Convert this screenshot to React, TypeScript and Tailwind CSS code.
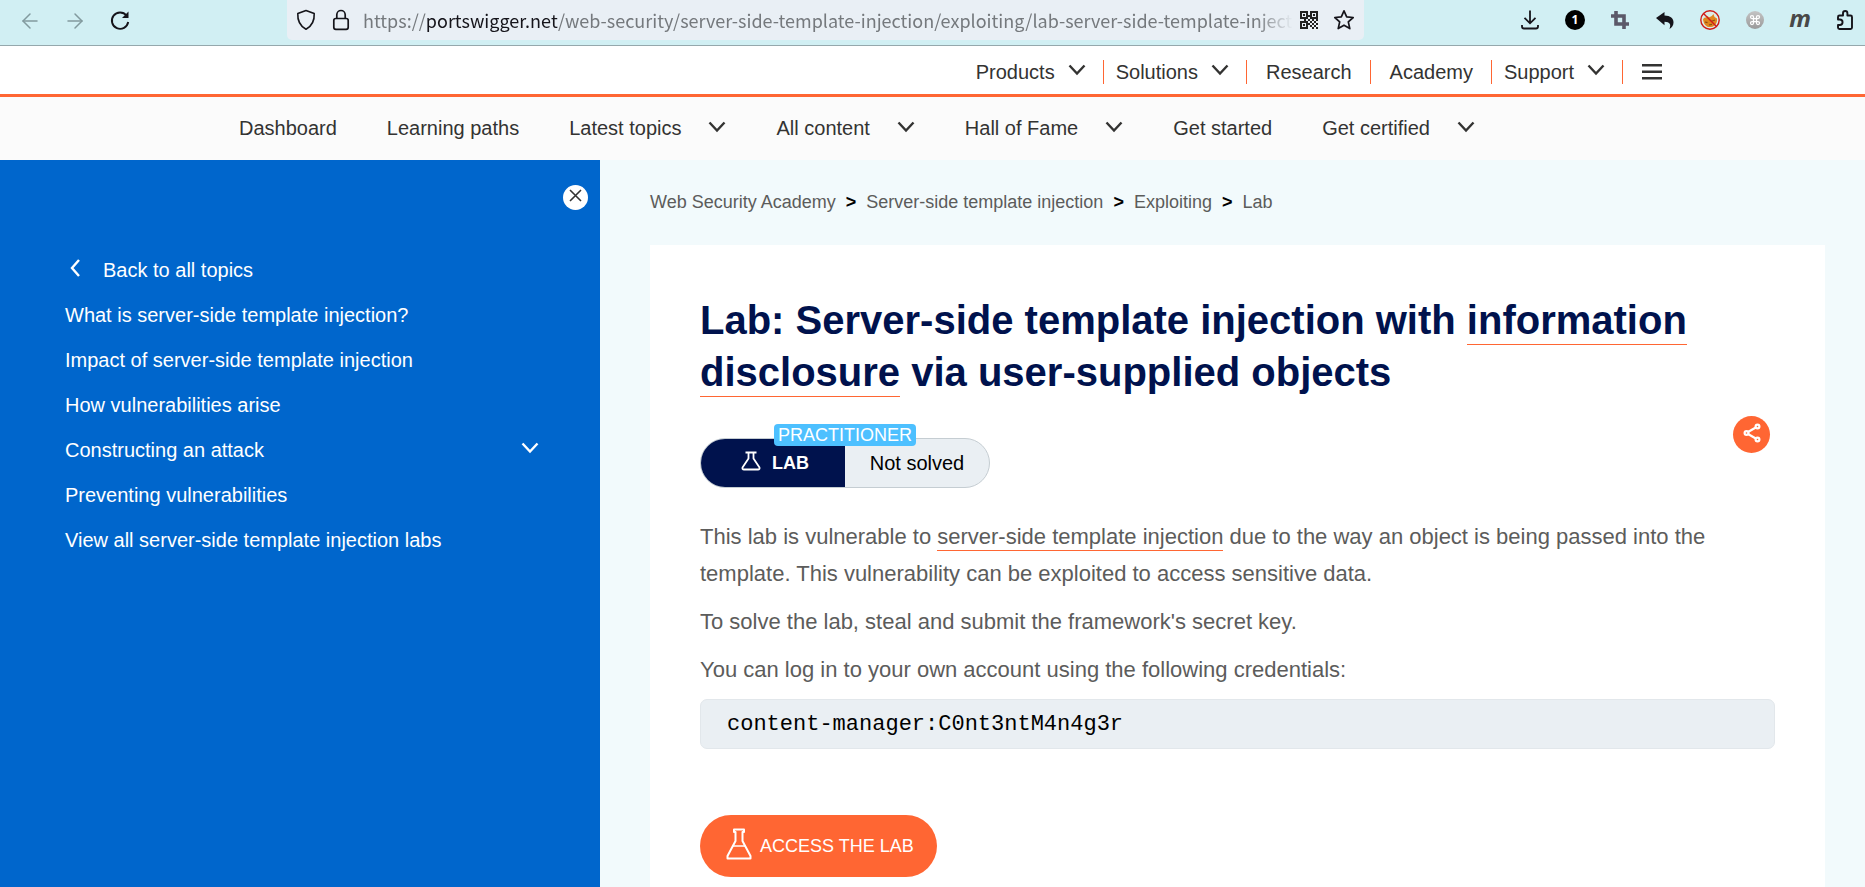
import type { ReactNode } from "react";
import { LuArrowLeft, LuArrowRight, LuCommand } from "react-icons/lu";

function Chevron({ className = "" }: { className?: string }) {
  return (
    <svg viewBox="0 0 18 12" fill="none" stroke="currentColor" strokeWidth="2.4" className={"h-3 w-[18px] shrink-0 " + className} aria-hidden="true">
      <path d="M1.500 1.500 9 9.500l7.500-8" />
    </svg>
  );
}

const browserButton = "flex size-6 items-center justify-center";

function QrIcon() {
  return (
    <svg viewBox="0 0 18 18" className="size-[18px]" fill="#222" aria-hidden="true">
      <path fillRule="evenodd" d="M0 0h8v8H0zM2 2v4h4V2zM10 0h8v8h-8zM12 2v4h4V2zM0 10h8v8H0zM2 12v4h4v-4z" />
      <path d="M3 3h2v2H3zM13 3h2v2h-2zM3 13h2v2H3zM8 4h2v2H8zM8 8h2v2H8zM4 8h2v2H4zM12 8h2v2h-2zM16 8h2v2h-2zM10 10h2v2h-2zM14 10h2v2h-2zM12 12h2v2h-2zM16 12h2v2h-2zM10 14h2v2h-2zM14 14h2v2h-2zM12 16h2v2h-2zM16 16h2v2h-2zM8 12h2v2H8z" />
    </svg>
  );
}

function BrowserBar() {
  return (
    <header className="flex h-[46px] items-start border-b border-[#95a8ac] bg-[#d1eff3] text-[#15141a]">
      <div className="flex w-[287px] shrink-0 items-center gap-[21px] pt-[9px] pl-[18px]">
        <button aria-label="Back" className={browserButton}>
          <LuArrowLeft className="size-6 text-[#829a9e]" strokeWidth={1.5} />
        </button>
        <button aria-label="Forward" className={browserButton}>
          <LuArrowRight className="size-6 text-[#829a9e]" strokeWidth={1.5} />
        </button>
        <button aria-label="Reload" className={browserButton}>
          <svg viewBox="0 0 24 24" className="size-6" fill="none" stroke="currentColor" strokeWidth="1.900">
            <path d="M18.500 6.500A8.200 8.200 0 1 0 20.200 13" />
            <path d="M20.500 2.500v6.500h-6.500z" fill="currentColor" stroke="none" />
          </svg>
        </button>
      </div>
      <div className="flex h-10 min-w-0 flex-1 items-center rounded-b-[5px] bg-[#e9eff5] pr-2 pl-[9px]">
        <svg viewBox="0 0 20 22" className="h-[22px] w-5 shrink-0" fill="none" stroke="currentColor" strokeWidth="1.600" strokeLinejoin="round">
          <path d="M10 1.500 18.200 4.500c.4 7-2.200 12.500-8.200 15.800C4 17 1.400 11.500 1.800 4.500z" />
        </svg>
        <svg viewBox="0 0 18 22" className="ml-4 h-[22px] w-[18px] shrink-0" fill="none" stroke="currentColor" strokeWidth="1.700">
          <rect x="1.800" y="9.500" width="14.400" height="10.800" rx="2" />
          <path d="M4.800 9.500V5.700a4.200 4.200 0 0 1 8.400 0v3.800" />
        </svg>
        <p className="ml-[13px] min-w-0 flex-1 overflow-hidden mask-r-from-[96%] font-['Noto_Sans_CJK_SC',sans-serif] text-[18px] leading-7 whitespace-nowrap text-[#75797d]">
          https://<span className="text-[#15141a]">portswigger.net</span>/web-security/server-side-template-injection/exploiting/lab-server-side-template-injectio
        </p>
        <div className="flex items-center gap-[11px] pl-1">
          <button aria-label="QR code" className={browserButton}>
            <QrIcon />
          </button>
          <button aria-label="Bookmark" className={browserButton}>
            <svg viewBox="0 0 24 24" className="size-6" fill="none" stroke="currentColor" strokeWidth="1.700" strokeLinejoin="round">
              <path d="m12 2.800 2.700 6 6.500.7-4.900 4.400 1.500 6.700-5.800-3.400-5.800 3.400 1.500-6.700L2.800 9.500l6.500-.7z" />
            </svg>
          </button>
        </div>
      </div>
      <div className="flex shrink-0 items-center gap-[21px] pt-2 pr-2 pl-[154px]">
        <button aria-label="Downloads" className={browserButton}>
          <svg viewBox="0 0 24 24" className="size-6" fill="none" stroke="currentColor" strokeWidth="1.800">
            <path d="M12 2.500v12.500M6.500 9.800l5.500 5.500 5.500-5.500M4 17v1.500q0 2 2 2h12q2 0 2-2V17" />
          </svg>
        </button>
        <button className="flex size-6 items-center justify-center">
          <span className="flex size-5 items-center justify-center rounded-full bg-black font-['Open_Sans',sans-serif] text-[12px] leading-5 font-bold text-white">1</span>
        </button>
        <button aria-label="Crop" className={browserButton}>
          <svg viewBox="0 0 24 24" className="size-6" fill="none" stroke="#5b5868" strokeWidth="3.600">
            <path d="M8 3v13h13M3 8h13v13" />
          </svg>
        </button>
        <button aria-label="Undo" className={browserButton}>
          <svg viewBox="0 0 24 24" className="size-6" fill="currentColor">
            <path d="M3 10 11.500 4v3.600c6 0 9 3 9 7 0 3-1.500 5-4 6.400 1.800-4.500.5-7-5-7.200v3.400z" />
          </svg>
        </button>
        <button aria-label="Proxy disabled" className={browserButton}>
          <svg viewBox="0 0 24 24" className="size-6" fill="none">
            <circle cx="12" cy="12" r="9" fill="#ddebe6" />
            <path d="M5 11.500c1-2 2-2.300 3.500-2l1-1.500 1.500 1.300c2-.5 3-1.500 4.500-3.300l1 3 2.500 1.500c.5 4-1.500 8-6 8.500-4 .6-7-1.500-8-7.500z" fill="#e0861f" />
            <path d="m7 14 2.500.6M13 13.500l4-1.500M11 17l3-.6" stroke="#8c4a12" strokeWidth="1.200" />
            <circle cx="12" cy="12" r="9.200" stroke="#cf1a17" strokeWidth="1.400" />
            <path d="m5.500 5.500 13 13" stroke="#cf1a17" strokeWidth="1.400" />
          </svg>
        </button>
        <button aria-label="Shortcuts" className={browserButton}>
          <span className="flex size-[18px] items-center justify-center rounded-full bg-linear-to-b from-[#c4c4c4] to-[#9a9a9a]">
            <LuCommand className="size-3 text-white" strokeWidth={2.5} />
          </span>
        </button>
        <button className="flex size-6 items-center justify-center pb-1 font-['Open_Sans',sans-serif] text-[24px] leading-5 font-bold text-[#484848] italic">m</button>
        <button aria-label="Extensions" className={browserButton}>
          <svg viewBox="0 0 24 24" className="size-6" fill="none" stroke="currentColor" strokeWidth="1.900" strokeLinejoin="round">
            <path d="M5 11.500V9q0-1.500 1.500-1.500H10V5.200a2.200 2.200 0 0 1 4.400 0v2.300h3.100q1.500 0 1.500 1.500v10.500q0 1.500-1.500 1.500h-11Q5 21 5 19.500V17h1.800a2.500 2.500 0 0 0 0-5.500z" />
          </svg>
        </button>
      </div>
    </header>
  );
}

const siteLinks = [
  { label: "Products", menu: true },
  { label: "Solutions", menu: true },
  { label: "Research", menu: false },
  { label: "Academy", menu: false },
  { label: "Support", menu: true },
];

function SiteNav() {
  return (
    <nav aria-label="Site" className="flex h-[51px] items-center justify-end border-b-[3px] border-[#ff6633] bg-white pt-[3px] pr-[203px] text-[20px] leading-6 text-[#333332]">
      {siteLinks.map((item) =>
        item.menu ? (
          <button key={item.label} className="flex items-center gap-[13px] border-r border-[#ff6633] pr-[17px] pl-3">
            {item.label}
            <Chevron className="mb-1" />
          </button>
        ) : (
          <a key={item.label} href="#" className="border-r border-[#ff6633] pr-[18px] pl-[19px]">
            {item.label}
          </a>
        ),
      )}
      <button aria-label="Menu" className="ml-[19px]">
        <svg viewBox="0 0 20 16" className="h-4 w-5" fill="currentColor">
          <path d="M0 0h20v2.500H0zM0 6.500h20V9H0zM0 13h20v2.500H0z" />
        </svg>
      </button>
    </nav>
  );
}

const academyLinks = [
  { label: "Dashboard", menu: false },
  { label: "Learning paths", menu: false },
  { label: "Latest topics", menu: true },
  { label: "All content", menu: true },
  { label: "Hall of Fame", menu: true },
  { label: "Get started", menu: false },
  { label: "Get certified", menu: true },
];

function AcademyNav() {
  return (
    <nav aria-label="Academy" className="flex h-[63px] items-center gap-[50px] bg-[#fbfbfb] pb-0.5 pl-[239px] text-[20px] leading-6 text-[#333332]">
      {academyLinks.map((item) =>
        item.menu ? (
          <button key={item.label} className="flex items-center gap-[27px]">
            {item.label}
            <Chevron className="mb-0.5" />
          </button>
        ) : (
          <a key={item.label} href="#">
            {item.label}
          </a>
        ),
      )}
    </nav>
  );
}

function Sidebar() {
  return (
    <aside className="w-[600px] shrink-0 bg-[#0066cc] text-[20px] leading-[45px] text-white">
      <div className="flex h-[88px] justify-end pt-[25px] pr-3">
        <button aria-label="Close menu" className="flex size-[25px] items-start justify-center rounded-full bg-white pt-1">
          <svg viewBox="0 0 13 13" className="size-[13px]" fill="none" stroke="#333332" strokeWidth="1.600">
            <path d="m1 1 11 11M12 1 1 12" />
          </svg>
        </button>
      </div>
      <ul className="pr-[61px] pl-[65px]">
        <li>
          <a href="#" className="flex items-center gap-[22px] pl-1">
            <svg viewBox="0 0 12 18" className="mb-1.5 h-[18px] w-3" fill="none" stroke="currentColor" strokeWidth="2.400">
              <path d="M10 1 3 9l7 8" />
            </svg>
            Back to all topics
          </a>
        </li>
        <li><a href="#">What is server-side template injection?</a></li>
        <li><a href="#">Impact of server-side template injection</a></li>
        <li><a href="#">How vulnerabilities arise</a></li>
        <li>
          <button className="flex w-full items-center justify-between">
            Constructing an attack
            <Chevron className="mb-1.5" />
          </button>
        </li>
        <li><a href="#">Preventing vulnerabilities</a></li>
        <li><a href="#">View all server-side template injection labs</a></li>
      </ul>
    </aside>
  );
}

function Breadcrumb() {
  const separator = <span aria-hidden="true" className="font-bold text-black">&gt;</span>;
  return (
    <nav aria-label="Breadcrumb" className="flex items-center gap-[10px] text-[18px] leading-6 text-[#5c5c5b]">
      <a href="#">Web Security Academy</a>
      {separator}
      <a href="#">Server-side template injection</a>
      {separator}
      <a href="#">Exploiting</a>
      {separator}
      <span>Lab</span>
    </nav>
  );
}

function TextLink({ children }: { children: ReactNode }) {
  return (
    <a href="#" className="border-b border-[#ff6633] pb-px">
      {children}
    </a>
  );
}

function LabStatus() {
  return (
    <div className="mt-[18px] mr-[5px] flex items-start justify-between">
      <div className="relative mt-[22px] flex h-[50px] w-[290px] rounded-full border border-[#c5cdd2] bg-[#eaeff3]">
        <div className="flex w-1/2 items-center justify-center gap-[11px] rounded-l-full bg-[#00124d] pl-1 text-[18px] font-bold text-white">
          <svg viewBox="0 0 20 20" className="mb-1 size-5" fill="none" stroke="currentColor" strokeWidth="1.800" strokeLinejoin="round" aria-hidden="true">
            <path d="M4.500 1.500h11M7.500 1.500v6L1.500 16.500q-.5 2 1.500 2h14q2 0 1.500-2l-6-9v-6" />
          </svg>
          LAB
        </div>
        <div className="flex w-1/2 items-center justify-center text-[20px] text-black">Not solved</div>
        <span className="absolute -top-[15px] left-[73px] rounded bg-[#4dc0ff] px-1 text-[18px] leading-[22px] text-white">PRACTITIONER</span>
      </div>
      <button aria-label="Share" className="flex size-[37px] items-center justify-center rounded-full bg-[#ff6633] pb-1 text-white">
        <svg viewBox="0 0 18 20" className="h-5 w-[18px]" fill="none" stroke="currentColor" strokeWidth="2.200">
          <circle cx="3.500" cy="10" r="1.900" />
          <circle cx="14.500" cy="3.500" r="1.900" />
          <circle cx="14.500" cy="16.500" r="1.900" />
          <path d="m5 9 7.800-4.500M5 11l7.800 4.500" />
        </svg>
      </button>
    </div>
  );
}

export default function App() {
  return (
    <div className="flex min-h-screen flex-col bg-[#f2fafc] font-['Liberation_Sans',Arial,sans-serif]">
      <BrowserBar />
      <SiteNav />
      <AcademyNav />
      <div className="flex flex-1">
        <Sidebar />
        <main className="flex min-w-0 flex-1 flex-col pt-[30px] pr-10 pl-[50px]">
          <Breadcrumb />
          <article className="mt-[31px] flex-1 bg-white px-[50px] pt-[49px] pb-[10px]">
            <h1 className="text-[40px] leading-[52px] font-bold text-[#00124d]">
              Lab: Server-side template injection with{" "}
              <a href="#" className="border-b border-[#ff6633] pb-0.5">information disclosure</a> via user-supplied objects
            </h1>
            <LabStatus />
            <div className="mt-[30px] flex flex-col gap-[11px] text-[22px] leading-[37px] text-[#5c5c5b]">
              <p>
                This lab is vulnerable to <TextLink>server-side template injection</TextLink> due to the way an object is being
                passed into the template. This vulnerability can be exploited to access sensitive data.
              </p>
              <p>To solve the lab, steal and submit the framework's secret key.</p>
              <p>You can log in to your own account using the following credentials:</p>
              <code className="flex h-[50px] items-center rounded-[7px] border border-[#e2e7eb] bg-[#eaeff3] px-[26px] font-['Liberation_Mono','Courier_New',monospace] text-[22px] text-black">
                content-manager:C0nt3ntM4n4g3r
              </code>
            </div>
            <a href="#" className="mt-[66px] flex h-[62px] w-fit items-center gap-2 rounded-full bg-[#ff6633] pr-[23px] pl-[26px] text-[18px] text-white">
              <svg viewBox="0 0 26 32" className="mb-1 h-8 w-[26px]" fill="none" stroke="currentColor" strokeWidth="2" strokeLinejoin="round" aria-hidden="true">
                <path d="M8 1.500h10v2.500h-1.500v9L24.500 28v2.500h-23V28L9.500 13V4H8z" />
                <path d="M6.500 18h13" strokeWidth="1.500" />
              </svg>
              ACCESS THE LAB
            </a>
          </article>
        </main>
      </div>
    </div>
  );
}
